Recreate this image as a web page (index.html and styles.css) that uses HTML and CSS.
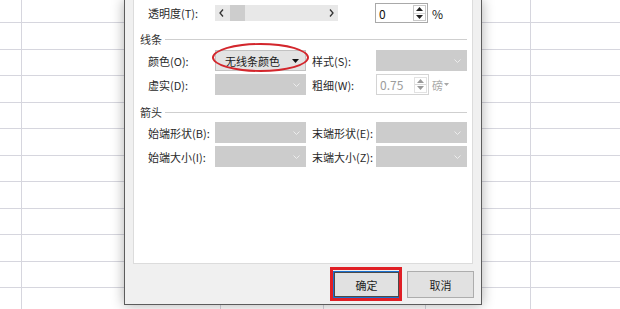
FILE: index.html
```html
<!DOCTYPE html>
<html lang="zh-CN">
<head>
<meta charset="utf-8">
<title>设置线条格式</title>
<link rel="stylesheet" href="styles.css">
</head>
<body>
<div class="dialog">
  <div class="panel">
    <div class="toprow">
      <span class="lbl">透明度(T):</span>
      <div class="scroll">
        <svg class="sarrow" width="5" height="8" viewBox="0 0 5 8"><path d="M4 0.5 L1 4 L4 7.5" fill="none" stroke="#333" stroke-width="1.3"/></svg>
        <span class="thumb"></span>
        <span class="sfill"></span>
        <svg class="sarrow" width="5" height="8" viewBox="0 0 5 8"><path d="M1 0.5 L4 4 L1 7.5" fill="none" stroke="#333" stroke-width="1.3"/></svg>
      </div>
      <div class="spin">
        <span class="val">0</span>
        <span class="spinbtns">
          <span class="sb"><svg width="7" height="4" viewBox="0 0 7 4"><path d="M0 4 L3.5 0 L7 4Z" fill="#222"/></svg></span>
          <span class="sb"><svg width="7" height="4" viewBox="0 0 7 4"><path d="M0 0 L3.5 4 L7 0Z" fill="#222"/></svg></span>
        </span>
      </div>
      <span class="unit">%</span>
    </div>

    <div class="section">线条</div>
    <div class="grid">
      <span class="lbl">颜色(O):</span>
      <div class="combo active">
        <span>无线条颜色</span>
        <svg width="7" height="4" viewBox="0 0 7 4"><path d="M0 0 L3.5 4 L7 0Z" fill="#111"/></svg>
        <span class="ellipse"></span>
      </div>
      <span class="lbl">样式(S):</span>
      <div class="combo"><svg width="7" height="4" viewBox="0 0 7 4"><path d="M0.5 0.5 L3.5 3.5 L6.5 0.5" fill="none" stroke="#ececec" stroke-width="1"/></svg></div>

      <span class="lbl">虚实(D):</span>
      <div class="combo"><svg width="7" height="4" viewBox="0 0 7 4"><path d="M0.5 0.5 L3.5 3.5 L6.5 0.5" fill="none" stroke="#ececec" stroke-width="1"/></svg></div>
      <span class="lbl">粗细(W):</span>
      <div class="widthcell">
        <div class="spin dis">
          <span class="val">0.75</span>
          <span class="spinbtns">
            <span class="sb"><svg width="7" height="4" viewBox="0 0 7 4"><path d="M0 4 L3.5 0 L7 4Z" fill="#9a9a9a"/></svg></span>
            <span class="sb"><svg width="7" height="4" viewBox="0 0 7 4"><path d="M0 0 L3.5 4 L7 0Z" fill="#9a9a9a"/></svg></span>
          </span>
        </div>
        <span class="pt">磅<svg width="5" height="3" viewBox="0 0 5 3"><path d="M0 0 L2.5 3 L5 0Z" fill="#a8a8a8"/></svg></span>
      </div>
    </div>

    <div class="section s2">箭头</div>
    <div class="grid">
      <span class="lbl">始端形状(B):</span>
      <div class="combo"><svg width="7" height="4" viewBox="0 0 7 4"><path d="M0.5 0.5 L3.5 3.5 L6.5 0.5" fill="none" stroke="#ececec" stroke-width="1"/></svg></div>
      <span class="lbl">末端形状(E):</span>
      <div class="combo"><svg width="7" height="4" viewBox="0 0 7 4"><path d="M0.5 0.5 L3.5 3.5 L6.5 0.5" fill="none" stroke="#ececec" stroke-width="1"/></svg></div>

      <span class="lbl">始端大小(I):</span>
      <div class="combo"><svg width="7" height="4" viewBox="0 0 7 4"><path d="M0.5 0.5 L3.5 3.5 L6.5 0.5" fill="none" stroke="#ececec" stroke-width="1"/></svg></div>
      <span class="lbl">末端大小(Z):</span>
      <div class="combo"><svg width="7" height="4" viewBox="0 0 7 4"><path d="M0.5 0.5 L3.5 3.5 L6.5 0.5" fill="none" stroke="#ececec" stroke-width="1"/></svg></div>
    </div>
  </div>
  <div class="footer">
    <button class="btn primary">确定<span class="redbox"></span></button>
    <button class="btn">取消</button>
  </div>
</div>
</body>
</html>
```
FILE: styles.css
```css
* { box-sizing: border-box; }

body {
  margin: 0;
  width: 620px;
  height: 309px;
  overflow: hidden;
  position: relative;
  font-family: "Noto Sans CJK SC", "Microsoft YaHei", sans-serif;
  font-size: 11px;
  color: #2a2a2a;
  background-color: #fff;
  background-image:
    linear-gradient(#d6d6de, #d6d6de),
    linear-gradient(#d6d6de, #d6d6de),
    linear-gradient(#d6d6de, #d6d6de),
    linear-gradient(#d6d6de, #d6d6de),
    linear-gradient(#d6d6de, #d6d6de),
    linear-gradient(to bottom, #d6d6de 0 1px, transparent 1px 27px, #d6d6de 27px 28px, transparent 28px 53px);
  background-size: 1px 100%, 1px 100%, 1px 100%, 1px 100%, 1px 100%, 100% 53px;
  background-position: 21px 0, 220px 0, 323px 0, 425px 0, 530px 0, 0 22px;
  background-repeat: no-repeat, no-repeat, no-repeat, no-repeat, no-repeat, repeat;
}

.dialog {
  position: absolute;
  left: 124px;
  top: 0;
  width: 358px;
  height: 305px;
  background: #f0f0f0;
  border: 1px solid #5c5c5c;
  border-top: none;
  box-shadow: 0 0 12px rgba(0, 0, 0, 0.32);
  padding: 0 8px 0 8px;
  display: flex;
  flex-direction: column;
}

.panel {
  height: 264px;
  background: #fff;
  border: 1px solid #dcdcdc;
  border-top: none;
  padding: 3px 5px 0 6px;
}

.lbl { white-space: nowrap; }

.toprow {
  display: flex;
  align-items: center;
  height: 20px;
  padding-left: 8px;
}
.toprow .lbl { width: 67px; }

.scroll {
  width: 123px;
  height: 16px;
  background: #e8e8e8;
  display: flex;
  align-items: center;
  padding: 0 4px 0 4px;
  margin-right: 37px;
}
.scroll .sarrow { flex: none; }
.thumb {
  width: 15px;
  height: 16px;
  background: #cdcdcd;
  margin-left: 6px;
}
.sfill { flex: 1; }

.spin {
  width: 53px;
  height: 20px;
  border: 1px solid #a9a9a9;
  background: #fff;
  display: flex;
  align-items: center;
  justify-content: space-between;
  padding: 0 1px 0 3px;
  font-size: 12px;
  color: #111;
}
.spinbtns {
  display: flex;
  flex-direction: column;
  height: 16px;
  width: 13px;
  border: 1px solid #c8c8c8;
}
.sb {
  flex: 1;
  display: flex;
  align-items: center;
  justify-content: center;
}
.sb + .sb { border-top: 1px solid #d8d8d8; }

.unit { margin-left: 4px; font-size: 12px; color: #222; }

.section {
  display: flex;
  align-items: center;
  gap: 3px;
  height: 18px;
  margin-top: 7px;
  color: #333;
}
.section::after {
  content: "";
  flex: 1;
  height: 1px;
  background: #cfcfcf;
}
.section.s2 { margin-top: 8px; }

.grid {
  display: grid;
  grid-template-columns: 67px 91px 70px 91px;
  grid-template-rows: 21px 21px;
  row-gap: 3px;
  margin-top: 2px;
  margin-left: 8px;
  align-items: center;
}
.section.s2 + .grid { margin-top: 1px; }
.grid .lbl:nth-child(4n+3) { padding-left: 6px; }

.combo {
  height: 21px;
  background: #cccccc;
  display: flex;
  align-items: center;
  justify-content: flex-end;
  padding-right: 6px;
  position: relative;
}
.combo.active {
  background: #e3e3e3;
  border: 1px solid #c2c2c2;
  justify-content: space-between;
  padding: 0 6px 0 9px;
  color: #1a1a1a;
}
.ellipse {
  position: absolute;
  left: -4px;
  right: -4px;
  top: -8px;
  bottom: -2px;
  border: 2px solid #d3262c;
  border-radius: 50%;
}

.widthcell {
  display: flex;
  align-items: center;
  width: 100px;
}
.spin.dis {
  height: 21px;
  border-color: #d4d4d4;
  color: #9c9c9c;
}
.spin.dis .spinbtns { border-color: #e2e2e2; }
.pt {
  margin-left: 3px;
  color: #a8a8a8;
  display: flex;
  align-items: center;
  gap: 1px;
}

.footer {
  flex: 1;
  display: flex;
  justify-content: flex-end;
  align-items: flex-start;
  gap: 7px;
  padding-top: 7px;
  margin-right: -1px;
}
.btn {
  width: 67px;
  height: 27px;
  background: #e1e1e1;
  border: 1px solid #adadad;
  font-family: inherit;
  font-size: 11px;
  color: #1e1e1e;
  padding: 0;
}
.btn.primary {
  position: relative;
  border: 1px solid #1a6fcf;
  box-shadow: inset 0 0 0 1px #4a4a4a;
}
.redbox {
  position: absolute;
  left: -4px;
  right: -3px;
  top: -5px;
  bottom: -4px;
  border: 3px solid #e01f26;
}
```
